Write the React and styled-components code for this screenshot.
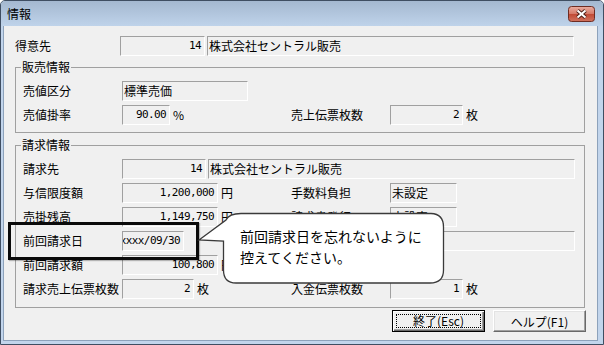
import React from 'react';
import styled, { createGlobalStyle } from 'styled-components';

const GlobalStyle = createGlobalStyle`
  html, body { margin: 0; padding: 0; background: #fff; }
  body {
    font-family: "Noto Sans CJK JP", "Noto Sans", sans-serif;
    font-size: 12px;
    color: #000;
  }
  * { box-sizing: border-box; }
`;

const Window = styled.div`
  position: relative;
  width: 604px;
  height: 345px;
  border: 1px solid #3f4e62;
  border-radius: 5px 5px 0 0;
  background: #c2d5ec;
  padding: 0 5px 3px 2px;
  display: flex;
  flex-direction: column;
  overflow: hidden;
`;

const TitleBar = styled.div`
  height: 25px;
  margin: 0 -5px 0 -2px;
  padding: 0 8px 0 6px;
  background: linear-gradient(#a4b8d0, #bfd3ea);
  display: flex;
  align-items: center;
  justify-content: space-between;
  line-height: 16px;
`;

const TitleText = styled.span`
  font-size: 12px;
  color: #000;
`;

const CloseButton = styled.div`
  width: 27px;
  height: 16px;
  display: flex;
`;

const Client = styled.div`
  flex: 1;
  background: #f0f0f0;
  border: 1px solid #8da2bb;
  border-top: none;
  padding: 10px 0 0 11px;
  display: flex;
  flex-direction: column;
`;

const Row = styled.div`
  display: flex;
  align-items: center;
  height: 20px;
  white-space: nowrap;
`;

const Cell = styled.div`
  display: flex;
  align-items: center;
  flex: none;
  width: ${(p) => (p.$w ? `${p.$w}px` : 'auto')};
`;

const Label = styled.span`
  flex: none;
  width: ${(p) => p.$w || 99}px;
  line-height: 18px;
  white-space: nowrap;
`;

const Field = styled.div`
  flex: none;
  width: ${(p) => p.$w}px;
  height: 20px;
  margin-left: ${(p) => p.$ml || 0}px;
  border: 1px solid;
  border-color: #a0a0a0 #ffffff #ffffff #a0a0a0;
  display: flex;
  align-items: center;
  justify-content: ${(p) => (p.$right ? 'flex-end' : 'flex-start')};
  padding: ${(p) => (p.$right ? '0 3px 0 1px' : '0 1px')};
  overflow: hidden;
  white-space: nowrap;
  line-height: 18px;
`;

const Num = styled.span`
  flex: none;
  font-family: "DejaVu Sans Mono", "Liberation Mono", monospace;
  font-size: 11px;
  letter-spacing: -0.6px;
`;

const Unit = styled.span`
  margin-left: 3px;
  line-height: 18px;
`;

const Group = styled.fieldset`
  width: 570px;
  margin: ${(p) => p.$mt}px 0 0 0;
  padding: 7px 0 ${(p) => p.$pb}px 7px;
  border: 1px solid #a0a0a0;
  min-width: 0;
  display: flex;
  flex-direction: column;
  gap: 4px;
`;

const Legend = styled.legend`
  margin-left: -2px;
  padding: 0 1px;
  font-size: 12px;
  line-height: 14px;
`;

const ButtonBar = styled.div`
  display: flex;
  justify-content: flex-end;
  gap: 8px;
  margin-top: 2px;
  padding-right: 11px;
`;

const Button = styled.button`
  width: 93px;
  height: 22px;
  padding: ${(p) => (p.$default ? '3px' : '0')};
  margin: 0;
  font-family: "Noto Sans CJK JP", "Noto Sans", sans-serif;
  font-size: 12px;
  color: #000;
  background: #f0f0f0;
  border: 1px solid;
  border-color: ${(p) => (p.$default ? '#000' : '#fff #696969 #696969 #fff')};
  box-shadow: ${(p) =>
    p.$default
      ? 'inset 1px 1px 0 #fff, inset -1px -1px 0 #696969, inset -2px -2px 0 #a0a0a0'
      : 'inset -1px -1px 0 #a0a0a0, inset 1px 1px 0 #e3e3e3'};
  display: flex;
  align-items: center;
  justify-content: center;
`;

const FocusRect = styled.span`
  width: 100%;
  height: 100%;
  border: 1px dotted #000;
  display: flex;
  align-items: center;
  justify-content: center;
  line-height: 14px;
`;

const Highlight = styled.div`
  position: absolute;
  left: 7px;
  top: 221px;
  width: 191px;
  height: 38px;
  border: 3px solid #0a0a0a;
  box-shadow: 1px 1px 1px rgba(0, 0, 0, 0.25);
`;

const Callout = styled.div`
  position: absolute;
  left: 195px;
  top: 208px;
  width: 252px;
  height: 78px;
`;

const CalloutShape = styled.svg`
  position: absolute;
  inset: 0;
`;

const CalloutText = styled.div`
  position: relative;
  padding: 17px 0 0 44px;
  font-size: 14px;
  line-height: 21px;
  color: #000;
  white-space: nowrap;
`;

function CloseIcon() {
  return (
    <svg width="27" height="16" viewBox="0 0 27 16">
      <defs>
        <linearGradient id="closeGrad" x1="0" y1="0" x2="0" y2="1">
          <stop offset="0" stopColor="#eaaea2" />
          <stop offset="0.48" stopColor="#d67a68" />
          <stop offset="0.52" stopColor="#c24a35" />
          <stop offset="1" stopColor="#d0735f" />
        </linearGradient>
      </defs>
      <rect x="0.5" y="0.5" width="26" height="15" rx="3" fill="url(#closeGrad)" stroke="#6e2c22" />
      <path d="M9.5 4.5 L17.5 11.5 M17.5 4.5 L9.5 11.5" stroke="#4a1d16" strokeWidth="3.8" />
      <path d="M9.5 4.5 L17.5 11.5 M17.5 4.5 L9.5 11.5" stroke="#ffffff" strokeWidth="2" />
    </svg>
  );
}

export default function App() {
  return (
    <>
      <GlobalStyle />
      <Window>
        <TitleBar>
          <TitleText>情報</TitleText>
          <CloseButton>
            <CloseIcon />
          </CloseButton>
        </TitleBar>
        <Client>
          <Row>
            <Label $w={105}>得意先</Label>
            <Field $w={85} $right>
              <Num>14</Num>
            </Field>
            <Field $w={367} $ml={2}>株式会社セントラル販売</Field>
          </Row>

          <Group $mt={4} $pb={7}>
            <Legend>販売情報</Legend>
            <Row>
              <Label>売値区分</Label>
              <Field $w={126}>標準売価</Field>
            </Row>
            <Row>
              <Cell $w={268}>
                <Label>売値掛率</Label>
                <Field $w={48} $right>
                  <Num>90.00</Num>
                </Field>
                <Unit>%</Unit>
              </Cell>
              <Cell>
                <Label>売上伝票枚数</Label>
                <Field $w={73} $right>
                  <Num>2</Num>
                </Field>
                <Unit>枚</Unit>
              </Cell>
            </Row>
          </Group>

          <Group $mt={5} $pb={8}>
            <Legend>請求情報</Legend>
            <Row>
              <Label>請求先</Label>
              <Field $w={84} $right>
                <Num>14</Num>
              </Field>
              <Field $w={367} $ml={2}>株式会社セントラル販売</Field>
            </Row>
            <Row>
              <Cell $w={268}>
                <Label>与信限度額</Label>
                <Field $w={96} $right>
                  <Num>1,200,000</Num>
                </Field>
                <Unit>円</Unit>
              </Cell>
              <Cell>
                <Label>手数料負担</Label>
                <Field $w={67}>未設定</Field>
              </Cell>
            </Row>
            <Row>
              <Cell $w={268}>
                <Label>売掛残高</Label>
                <Field $w={96} $right>
                  <Num>1,149,750</Num>
                </Field>
                <Unit>円</Unit>
              </Cell>
              <Cell>
                <Label>請求書発行</Label>
                <Field $w={67}>未設定</Field>
              </Cell>
            </Row>
            <Row>
              <Cell $w={268}>
                <Label>前回請求日</Label>
                <Field $w={62} $right>
                  <Num>xxxx/09/30</Num>
                </Field>
              </Cell>
              <Cell>
                <Label />
                <Field $w={185}></Field>
              </Cell>
            </Row>
            <Row>
              <Cell $w={268}>
                <Label>前回請求額</Label>
                <Field $w={96} $right>
                  <Num>100,800</Num>
                </Field>
                <Unit>円</Unit>
              </Cell>
            </Row>
            <Row>
              <Cell $w={268}>
                <Label>請求売上伝票枚数</Label>
                <Field $w={72} $right>
                  <Num>2</Num>
                </Field>
                <Unit>枚</Unit>
              </Cell>
              <Cell>
                <Label>入金伝票枚数</Label>
                <Field $w={73} $right>
                  <Num>1</Num>
                </Field>
                <Unit>枚</Unit>
              </Cell>
            </Row>
          </Group>

          <ButtonBar>
            <Button $default>
              <FocusRect>終了(Esc)</FocusRect>
            </Button>
            <Button>ヘルプ(F1)</Button>
          </ButtonBar>
        </Client>

        <Highlight />
        <Callout>
          <CalloutShape width="252" height="78" viewBox="196 209 252 78">
            <path
              d="M199 240 L226 220 Q229 213.5 241 213.5 L431 213.5 Q443.5 214 443.5 227 L443.5 270 Q443.5 283 430 283 L236 283 Q223.5 283 223.5 270 L223.5 241 Z"
              fill="#ffffff"
              stroke="#3a3a3a"
              strokeWidth="1.3"
            />
          </CalloutShape>
          <CalloutText>
            前回請求日を忘れないように
            <br />
            控えてください。
          </CalloutText>
        </Callout>
      </Window>
    </>
  );
}
